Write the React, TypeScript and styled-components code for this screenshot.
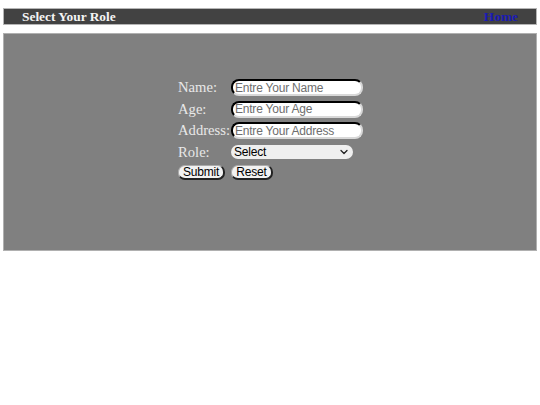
import styled, { createGlobalStyle } from "styled-components";

const GlobalStyle = createGlobalStyle`
  body {
    margin: 0;
    background: #fff;
    font-family: "Liberation Serif", "Times New Roman", serif;
  }
`;

const Page = styled.div`
  padding: 8px 3px 0;
`;

const TopBar = styled.header`
  display: flex;
  align-items: center;
  justify-content: space-between;
  height: 15px;
  padding: 0 18px;
  background: #424242;
  border: 1px solid #b5b5b5;
  font-weight: bold;
  font-size: 13.4px;
`;

const Title = styled.span`
  color: #f4f4f4;
`;

const HomeLink = styled.a`
  color: #1a1ab4;
  text-decoration: none;
`;

const Panel = styled.main`
  margin-top: 8px;
  height: 218px;
  box-sizing: border-box;
  padding-top: 45px;
  display: flex;
  justify-content: center;
  align-items: flex-start;
  background: #808080;
  border: 1px solid #b0b0b0;
`;

const Form = styled.form`
  display: grid;
  grid-template-columns: auto auto;
  column-gap: 1px;
  row-gap: 4.6px;
  align-items: center;
  margin-left: 1px;
`;

const Label = styled.label`
  color: #e8e8e8;
  font-size: 14.6px;
  line-height: 17px;
`;

const fieldFont = `
  font-family: "Liberation Sans", Arial, sans-serif;
  font-size: 12px;
  letter-spacing: -0.2px;
`;

const Input = styled.input`
  width: 132px;
  height: 17px;
  box-sizing: border-box;
  border-radius: 8px;
  border: 2px inset #333;
  border-right-color: #d8d8d8;
  border-bottom-color: #d8d8d8;
  background: #fff;
  ${fieldFont}
  padding: 0 2px;
  &::placeholder {
    color: #6e6e6e;
  }
`;

const SelectWrap = styled.div`
  position: relative;
  width: 122px;
  height: 14px;
`;

const Select = styled.select`
  appearance: none;
  display: block;
  width: 100%;
  height: 100%;
  border-radius: 7px;
  border: none;
  background: #efefef;
  ${fieldFont}
  padding: 0 0 0 3px;
  color: #000;
`;

const Chevron = styled.svg`
  position: absolute;
  right: 5px;
  top: 4px;
  width: 8px;
  height: 6px;
  pointer-events: none;
`;

const Buttons = styled.div`
  display: contents;
`;

const Button = styled.button<{ $w: number }>`
  justify-self: start;
  width: ${(p) => p.$w}px;
  height: 15px;
  padding: 0;
  border-radius: 7px;
  border: 1px solid #aaa;
  border-right: 2px solid #222;
  border-bottom: 2px solid #222;
  background: #f2f2f2;
  ${fieldFont}
  line-height: 11px;
  color: #000;
`;

export default function App() {
  return (
    <>
      <GlobalStyle />
      <Page>
        <TopBar>
          <Title>Select Your Role</Title>
          <HomeLink href="#">Home</HomeLink>
        </TopBar>
        <Panel>
          <Form>
            <Label htmlFor="name">Name:</Label>
            <Input id="name" placeholder="Entre Your Name" />
            <Label htmlFor="age">Age:</Label>
            <Input id="age" placeholder="Entre Your Age" />
            <Label htmlFor="address">Address:</Label>
            <Input id="address" placeholder="Entre Your Address" />
            <Label htmlFor="role">Role:</Label>
            <SelectWrap>
              <Select id="role" defaultValue="">
                <option value="">Select</option>
                <option value="admin">Admin</option>
                <option value="user">User</option>
              </Select>
              <Chevron viewBox="0 0 8 6">
                <path
                  d="M1 1.5 L4 4.5 L7 1.5"
                  fill="none"
                  stroke="#222"
                  strokeWidth="1.3"
                  strokeLinecap="round"
                  strokeLinejoin="round"
                />
              </Chevron>
            </SelectWrap>
            <Buttons>
              <Button type="submit" $w={47}>
                Submit
              </Button>
              <Button type="reset" $w={42}>
                Reset
              </Button>
            </Buttons>
          </Form>
        </Panel>
      </Page>
    </>
  );
}
